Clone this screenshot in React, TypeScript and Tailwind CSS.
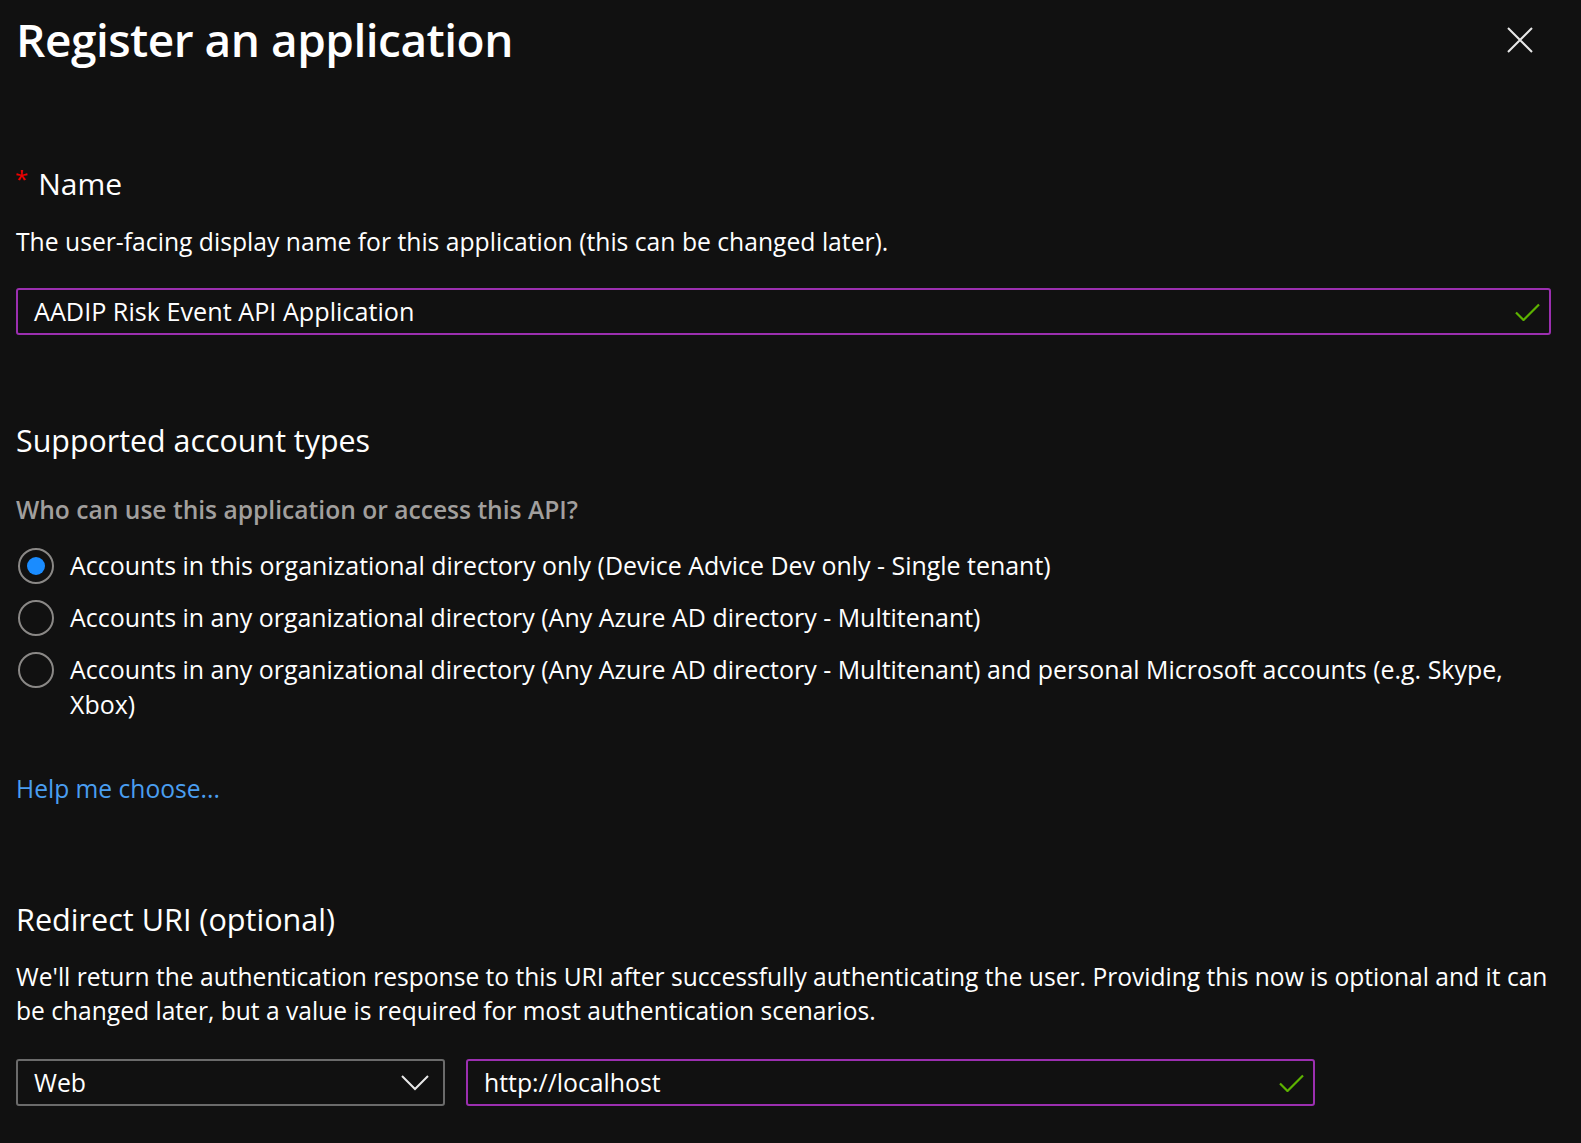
import React from "react";

const Check = () => (
  <svg width="25" height="18" viewBox="0 0 25 18" fill="none">
    <path d="M1 9.5 L8.5 17 L24 1.5" stroke="#5db300" strokeWidth="2.2" />
  </svg>
);

const Radio = ({ checked }: { checked?: boolean }) => (
  <div className="w-[36px] h-[36px] rounded-full border-2 border-[#8a8886] flex items-center justify-center shrink-0">
    {checked && <div className="w-[18px] h-[18px] rounded-full bg-[#1a8cff]" />}
  </div>
);

export default function App() {
  return (
    <div
      className="min-h-[1143px] bg-[#111111] text-white pl-[16px] pr-[30px]"
      style={{ fontFamily: '"Open Sans", "Noto Sans", sans-serif' }}
    >
      <div className="flex items-start justify-between pt-[11px]">
        <h1 className="text-[46px] leading-[56px] font-semibold tracking-[-0.5px]">Register an application</h1>
        <svg width="26" height="26" viewBox="0 0 26 26" className="mt-[16px] mr-[18px]">
          <path d="M1 1 L25 25 M25 1 L1 25" stroke="#e8e8e8" strokeWidth="2" />
        </svg>
      </div>

      <div className="mt-[97px] text-[30px] leading-[40px] flex items-start">
        <span className="text-[#e00] text-[24px] leading-[30px] mr-[10px] ml-[-1px]">*</span>
        <span>Name</span>
      </div>
      <p className="mt-[20px] text-[24.7px] leading-[36px]">
        The user-facing display name for this application (this can be changed later).
      </p>
      <div className="mt-[28px] h-[47px] border-2 border-[#9b2fb0] rounded-[3px] flex items-center justify-between pl-[16px] pr-[9px]">
        <span className="text-[25.2px]">AADIP Risk Event API Application</span>
        <Check />
      </div>

      <h2 className="mt-[86px] text-[30.4px] leading-[40px] font-normal">Supported account types</h2>
      <p className="mt-[31px] text-[24.6px] leading-[36px] font-semibold text-[#a19f9d]">
        Who can use this application or access this API?
      </p>
      <div className="mt-[20px] flex flex-col gap-[16px]">
        <div className="flex items-start gap-[16px] ml-[2px]">
          <Radio checked />
          <span className="text-[24.95px] leading-[35px]">
            Accounts in this organizational directory only (Device Advice Dev only - Single tenant)
          </span>
        </div>
        <div className="flex items-start gap-[16px] ml-[2px]">
          <Radio />
          <span className="text-[24.95px] leading-[35px]">
            Accounts in any organizational directory (Any Azure AD directory - Multitenant)
          </span>
        </div>
        <div className="flex items-start gap-[16px] ml-[2px]">
          <Radio />
          <span className="text-[24.95px] leading-[35px]">
            Accounts in any organizational directory (Any Azure AD directory - Multitenant) and personal Microsoft accounts (e.g. Skype,
            <br />
            Xbox)
          </span>
        </div>
      </div>

      <a className="block mt-[49px] text-[24.6px] leading-[36px] text-[#4a9ef0]">Help me choose...</a>

      <h2 className="mt-[92px] text-[30.6px] leading-[40px] font-normal">Redirect URI (optional)</h2>
      <p className="mt-[21px] text-[24.6px] leading-[34px]">
        We'll return the authentication response to this URI after successfully authenticating the user. Providing this now is optional and it can
        <br />
        be changed later, but a value is required for most authentication scenarios.
      </p>
      <div className="mt-[31px] flex gap-[21px]">
        <div className="w-[429px] h-[47px] border-2 border-[#6b6b6b] rounded-[3px] flex items-center justify-between pl-[16px] pr-[14px]">
          <span className="text-[24.8px]">Web</span>
          <svg width="28" height="16" viewBox="0 0 28 16">
            <path d="M1 1 L14 14 L27 1" stroke="#e8e8e8" strokeWidth="2" fill="none" />
          </svg>
        </div>
        <div className="w-[849px] h-[47px] border-2 border-[#9b2fb0] rounded-[3px] flex items-center justify-between pl-[16px] pr-[9px]">
          <span className="text-[24.8px]">http://localhost</span>
          <Check />
        </div>
      </div>
    </div>
  );
}
